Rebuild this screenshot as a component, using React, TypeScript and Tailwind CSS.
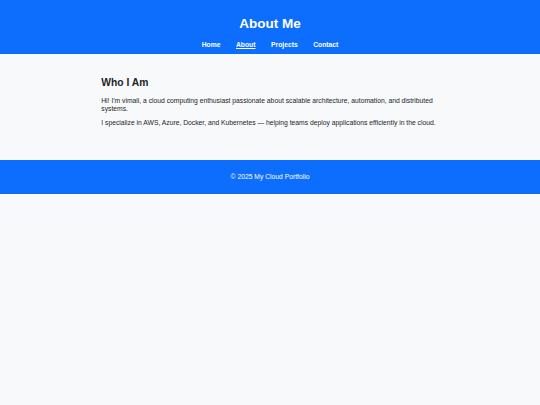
import React from 'react';

const links = ['Home', 'About', 'Projects', 'Contact'];

export default function App() {
  return (
    <div className="min-h-[405px] bg-[#f8f9fa] text-[#212529]" style={{ fontFamily: '"Liberation Sans", Arial, sans-serif' }}>
      <header className="bg-[#0d6efd] text-white text-center h-[54px] pt-[14px]">
        <h1 className="text-[13.5px] font-bold leading-[20px]">About Me</h1>
        <nav className="mt-[6px] flex justify-center gap-[15.5px] text-[6.75px] font-bold leading-[10px]">
          {links.map((l) => (
            <a key={l} href="#" className={l === 'About' ? 'underline' : ''}>
              {l}
            </a>
          ))}
        </nav>
      </header>

      <main className="max-w-[337.5px] mx-auto pt-[22px] h-[106px]">
        <h2 className="text-[10.3px] font-bold leading-[14px]">Who I Am</h2>
        <p className="mt-[7px] text-[6.75px] leading-[8px]">
          Hi! I'm vimali, a cloud computing enthusiast passionate about scalable architecture, automation, and distributed systems.
        </p>
        <p className="mt-[6px] text-[6.75px] leading-[8px]">
          I specialize in AWS, Azure, Docker, and Kubernetes — helping teams deploy applications efficiently in the cloud.
        </p>
      </main>

      <footer className="bg-[#0d6efd] text-white text-center h-[34px] flex items-center justify-center text-[6.75px]">
        © 2025 My Cloud Portfolio
      </footer>
    </div>
  );
}
